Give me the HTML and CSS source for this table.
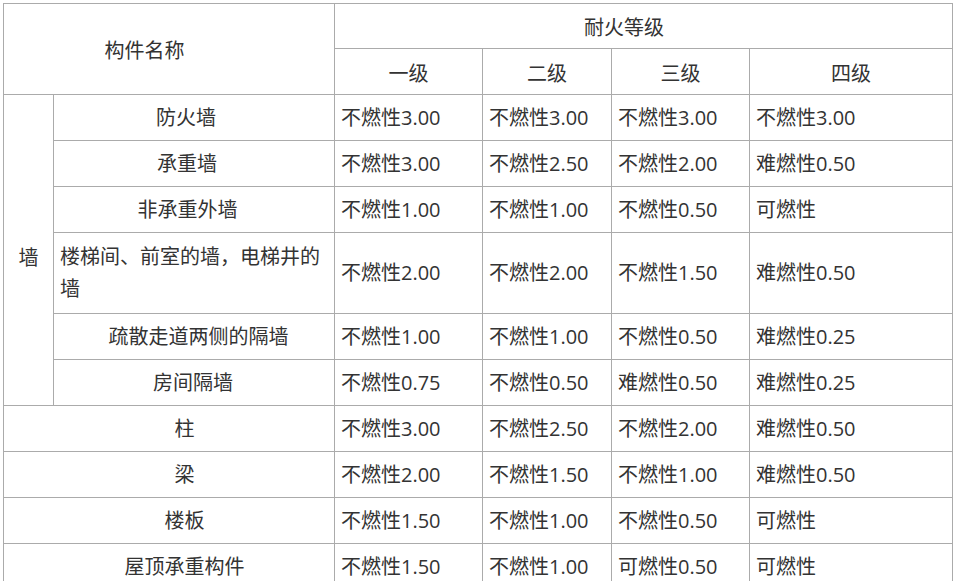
FILE: index.html
```html
<!DOCTYPE html>
<html lang="zh-CN">
<head>
<meta charset="utf-8">
<title>耐火等级</title>
<link rel="stylesheet" href="styles.css">
</head>
<body>
<table class="fire-table">
  <colgroup>
    <col class="c-wall">
    <col class="c-name">
    <col class="c-g1">
    <col class="c-g2">
    <col class="c-g3">
    <col class="c-g4">
  </colgroup>
  <tr class="head1">
    <td class="center h-name" colspan="2" rowspan="2">构件名称</td>
    <td class="center h-rating" colspan="4">耐火等级</td>
  </tr>
  <tr class="head2">
    <td class="center">一级</td>
    <td class="center">二级</td>
    <td class="center">三级</td>
    <td class="center">四级</td>
  </tr>
  <tr>
    <td class="center wall" rowspan="6">墙</td>
    <td class="center n-left8">防火墙</td>
    <td>不燃性3.00</td><td>不燃性3.00</td><td>不燃性3.00</td><td>不燃性3.00</td>
  </tr>
  <tr>
    <td class="center n-left7">承重墙</td>
    <td>不燃性3.00</td><td>不燃性2.50</td><td>不燃性2.00</td><td>难燃性0.50</td>
  </tr>
  <tr>
    <td class="center n-left6">非承重外墙</td>
    <td>不燃性1.00</td><td>不燃性1.00</td><td>不燃性0.50</td><td>可燃性</td>
  </tr>
  <tr class="tall">
    <td>楼梯间、前室的墙，电梯井的墙</td>
    <td>不燃性2.00</td><td>不燃性2.00</td><td>不燃性1.50</td><td>难燃性0.50</td>
  </tr>
  <tr>
    <td class="center n-right4">疏散走道两侧的隔墙</td>
    <td>不燃性1.00</td><td>不燃性1.00</td><td>不燃性0.50</td><td>难燃性0.25</td>
  </tr>
  <tr>
    <td class="center n-left1">房间隔墙</td>
    <td>不燃性0.75</td><td>不燃性0.50</td><td>难燃性0.50</td><td>难燃性0.25</td>
  </tr>
  <tr>
    <td class="center span-name" colspan="2">柱</td>
    <td>不燃性3.00</td><td>不燃性2.50</td><td>不燃性2.00</td><td>难燃性0.50</td>
  </tr>
  <tr>
    <td class="center span-name" colspan="2">梁</td>
    <td>不燃性2.00</td><td>不燃性1.50</td><td>不燃性1.00</td><td>难燃性0.50</td>
  </tr>
  <tr>
    <td class="center span-name" colspan="2">楼板</td>
    <td>不燃性1.50</td><td>不燃性1.00</td><td>不燃性0.50</td><td>可燃性</td>
  </tr>
  <tr>
    <td class="center span-name" colspan="2">屋顶承重构件</td>
    <td>不燃性1.50</td><td>不燃性1.00</td><td>可燃性0.50</td><td>可燃性</td>
  </tr>
</table>
</body>
</html>
```
FILE: styles.css
```css
html, body {
  margin: 0;
  background: #ffffff;
}
body {
  padding: 3px 0 0 3px;
}
.fire-table {
  border-collapse: collapse;
  table-layout: fixed;
  width: 949px;
  font-family: "Open Sans", "Noto Sans CJK SC", sans-serif;
  font-size: 20px;
  line-height: 32px;
  color: #333333;
}
.c-wall { width: 50px; }
.c-name { width: 281px; }
.c-g1 { width: 148px; }
.c-g2 { width: 129px; }
.c-g3 { width: 138px; }
.c-g4 { width: 203px; }
.fire-table tr {
  height: 46px;
}
.fire-table tr.head1 {
  height: 45px;
}
.fire-table tr.tall {
  height: 81px;
}
.fire-table td {
  border: 1px solid #ababab;
  padding: 0 6px;
  text-align: left;
  vertical-align: middle;
  white-space: normal;
}
.fire-table td.center {
  text-align: center;
}
.fire-table td.wall {
  padding-top: 16px;
}
.fire-table td.h-name {
  padding-right: 55px;
  padding-top: 3px;
}
.fire-table td.h-rating {
  padding-right: 45px;
  padding-top: 4px;
}
.fire-table tr.head2 td {
  padding-top: 4px;
}
.fire-table td.n-left8 { padding-right: 22px; }
.fire-table td.n-left7 { padding-right: 20px; }
.fire-table td.n-left6 { padding-right: 19px; }
.fire-table td.n-left1 { padding-right: 8px; }
.fire-table td.n-right4 { padding-left: 15px; }
.fire-table td.span-name { padding-left: 37px; }
```
